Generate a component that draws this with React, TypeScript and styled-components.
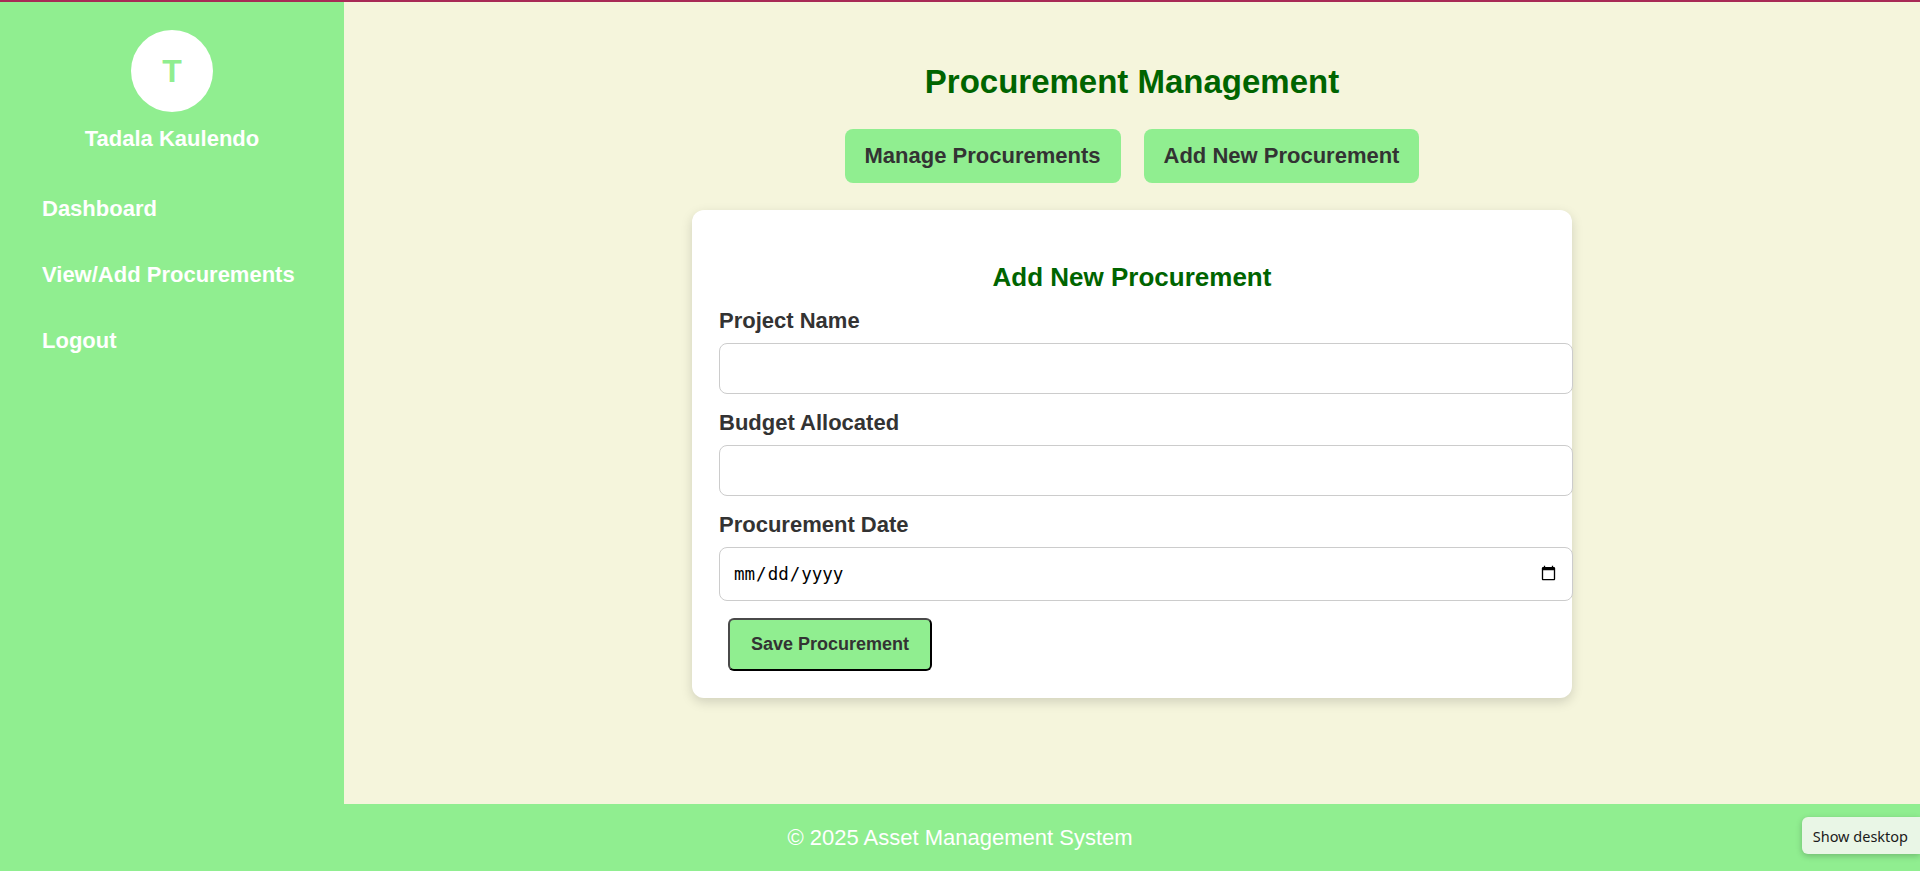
import React from "react";
import styled, { createGlobalStyle } from "styled-components";

const GlobalStyle = createGlobalStyle`
  html, body {
    margin: 0;
    padding: 0;
  }
  body {
    font-family: "Liberation Sans", Arial, sans-serif;
  }
  * {
    box-sizing: border-box;
  }
`;

const Page = styled.div`
  position: relative;
  min-height: 100vh;
  display: flex;
  flex-direction: column;
  border-top: 2px solid #a82a56;
`;

const Body = styled.div`
  flex: 1;
  display: flex;
`;

const Sidebar = styled.aside`
  width: 344px;
  flex-shrink: 0;
  background: #90ee90;
  padding-top: 28px;
  display: flex;
  flex-direction: column;
`;

const Profile = styled.div`
  display: flex;
  flex-direction: column;
  align-items: center;
`;

const Avatar = styled.div`
  width: 82px;
  height: 82px;
  border-radius: 50%;
  background: #ffffff;
  color: #90ee90;
  font-size: 32px;
  font-weight: bold;
  display: flex;
  align-items: center;
  justify-content: center;
`;

const UserName = styled.div`
  margin-top: 14px;
  color: #ffffff;
  font-size: 22px;
  font-weight: bold;
`;

const Nav = styled.nav`
  margin-top: 24px;
  display: flex;
  flex-direction: column;
`;

const NavLink = styled.a`
  display: block;
  padding: 20px 42px;
  line-height: 26px;
  color: #ffffff;
  font-size: 22px;
  font-weight: bold;
  text-decoration: none;
  cursor: pointer;
`;

const Main = styled.main`
  flex: 1;
  background: #f5f5dc;
  padding: 61px 20px 40px;
  display: flex;
  flex-direction: column;
  align-items: center;
`;

const Title = styled.h1`
  margin: 0;
  font-size: 33px;
  line-height: 38px;
  font-weight: bold;
  color: #006400;
`;

const TabRow = styled.div`
  margin-top: 28px;
  display: flex;
  gap: 23px;
`;

const TabButton = styled.button`
  font-family: inherit;
  font-size: 22px;
  font-weight: bold;
  line-height: 26px;
  padding: 14px 20px;
  border: none;
  border-radius: 8px;
  background: #90ee90;
  color: #333333;
  cursor: pointer;
`;

const Card = styled.section`
  margin-top: 27px;
  width: 880px;
  padding: 27px;
  background: #ffffff;
  border-radius: 12px;
  box-shadow: 0 4px 12px rgba(0, 0, 0, 0.15);
`;

const CardTitle = styled.h2`
  margin: 25px 0 15px;
  font-size: 26px;
  line-height: 30px;
  font-weight: bold;
  text-align: center;
  color: #006400;
`;

const Form = styled.form`
  display: flex;
  flex-direction: column;
  align-items: flex-start;
`;

const Label = styled.label`
  display: block;
  padding-top: 1px;
  margin-bottom: 10px;
  font-size: 22px;
  line-height: 25px;
  font-weight: bold;
  color: #333333;
`;

const Input = styled.input<{ $tall?: boolean }>`
  display: block;
  box-sizing: content-box;
  width: 100%;
  height: ${(p) => (p.$tall ? "52px" : "49px")};
  padding: 0 13px;
  margin: 0 0 15px;
  border: 1px solid #cccccc;
  border-radius: 8px;
  background: #ffffff;
  font-family: "DejaVu Sans Mono", monospace;
  font-size: 17.5px;
  color: #000000;
  outline: none;
`;

const SaveButton = styled.button`
  margin: 2px 0 0 9px;
  padding: 13px 21px;
  font-family: inherit;
  font-size: 18px;
  line-height: 23px;
  font-weight: bold;
  color: #333333;
  background: #90ee90;
  border: 2px solid;
  border-color: #4a4a4a #000000 #000000 #4a4a4a;
  border-radius: 6px;
  cursor: pointer;
`;

const Footer = styled.footer`
  height: 67px;
  flex-shrink: 0;
  background: #90ee90;
  color: #ffffff;
  font-size: 22px;
  display: flex;
  align-items: center;
  justify-content: center;
`;

const DesktopTip = styled.div`
  position: absolute;
  right: 0;
  bottom: 17px;
  height: 37px;
  padding: 0 12px 0 11px;
  display: flex;
  align-items: center;
  background: #e9f6e6;
  border-radius: 6px 0 0 6px;
  box-shadow: 0 2px 6px rgba(0, 0, 0, 0.22);
  font-family: "Noto Sans", "Open Sans", sans-serif;
  font-size: 14.5px;
  color: #1a1a1a;
`;

export default function App() {
  return (
    <>
      <GlobalStyle />
      <Page>
        <Body>
          <Sidebar>
            <Profile>
              <Avatar>T</Avatar>
              <UserName>Tadala Kaulendo</UserName>
            </Profile>
            <Nav>
              <NavLink>Dashboard</NavLink>
              <NavLink>View/Add Procurements</NavLink>
              <NavLink>Logout</NavLink>
            </Nav>
          </Sidebar>
          <Main>
            <Title>Procurement Management</Title>
            <TabRow>
              <TabButton>Manage Procurements</TabButton>
              <TabButton>Add New Procurement</TabButton>
            </TabRow>
            <Card>
              <CardTitle>Add New Procurement</CardTitle>
              <Form onSubmit={(e) => e.preventDefault()}>
                <Label htmlFor="projectName">Project Name</Label>
                <Input id="projectName" type="text" />
                <Label htmlFor="budget">Budget Allocated</Label>
                <Input id="budget" type="number" />
                <Label htmlFor="date">Procurement Date</Label>
                <Input id="date" type="date" $tall />
                <SaveButton type="submit">Save Procurement</SaveButton>
              </Form>
            </Card>
          </Main>
        </Body>
        <Footer>© 2025 Asset Management System</Footer>
        <DesktopTip>Show desktop</DesktopTip>
      </Page>
    </>
  );
}
